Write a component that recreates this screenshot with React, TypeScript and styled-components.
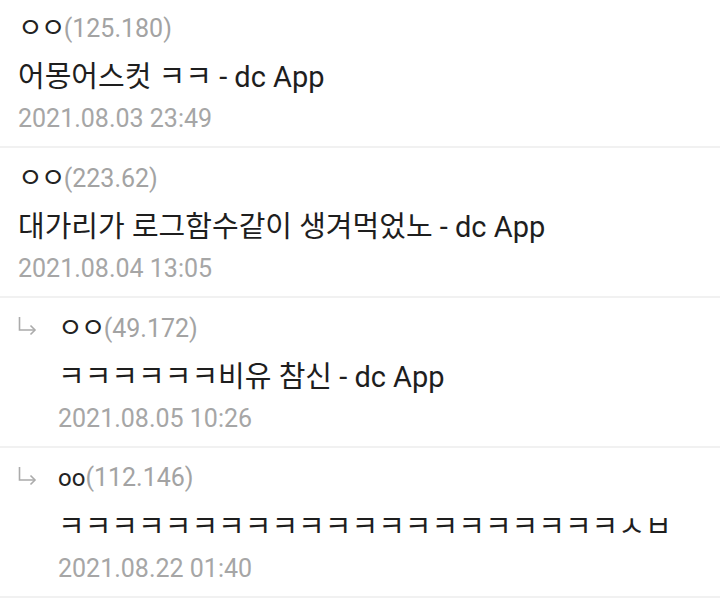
import React from 'react';
import styled, { createGlobalStyle } from 'styled-components';

const GlobalStyle = createGlobalStyle`
  html, body {
    margin: 0;
    padding: 0;
    background: #fff;
  }
  body {
    font-family: Roboto, "Noto Sans CJK KR", sans-serif;
    -webkit-font-smoothing: antialiased;
  }
`;

interface IComment {
  nick: string;
  ip: string;
  text: string;
  date: string;
  reply?: boolean;
}

const comments: IComment[] = [
  { nick: 'ㅇㅇ', ip: '(125.180)', text: '어몽어스컷 ㅋㅋ - dc App', date: '2021.08.03 23:49' },
  { nick: 'ㅇㅇ', ip: '(223.62)', text: '대가리가 로그함수같이 생겨먹었노 - dc App', date: '2021.08.04 13:05' },
  { nick: 'ㅇㅇ', ip: '(49.172)', text: 'ㅋㅋㅋㅋㅋㅋ비유 참신 - dc App', date: '2021.08.05 10:26', reply: true },
  {
    nick: 'oo',
    ip: '(112.146)',
    text: 'ㅋㅋㅋㅋㅋㅋㅋㅋㅋㅋㅋㅋㅋㅋㅋㅋㅋㅋㅋㅋㅋㅅㅂ',
    date: '2021.08.22 01:40',
    reply: true
  }
];

const List = styled.ul`
  list-style: none;
  margin: 0;
  padding: 0;
  width: 720px;
`;

const Row = styled.li<{ $reply?: boolean }>`
  display: grid;
  grid-template-columns: ${(p) => (p.$reply ? '40px 1fr' : '0 1fr')};
  padding: 12px 18px 9px;
  border-bottom: 2px solid #f1f1f1;

  &:first-child {
    padding-top: 10px;
  }
`;

const ReplyMark = styled.div`
  padding-top: 5px;
  color: #ababab;
`;

const Body = styled.div`
  display: flex;
  flex-direction: column;
  min-width: 0;
`;

const Writer = styled.div`
  height: 36px;
  line-height: 36px;
  font-size: 24px;
  color: #222;
  white-space: nowrap;
`;

// the jamo nick "ㅇㅇ" is set a little larger, with its glyphs pulled together
const Nick = styled.span<{ $jamo?: boolean }>`
  font-size: ${(p) => (p.$jamo ? '27px' : '24px')};
  letter-spacing: ${(p) => (p.$jamo ? '-2px' : '0')};
`;

const Ip = styled.span`
  color: #a3a3a3;
  font-size: 25px;
`;

const Text = styled.div`
  margin-top: 11px;
  height: 40px;
  line-height: 40px;
  font-size: 29px;
  color: #1e1e1e;
  white-space: nowrap;
`;

const Date = styled.div`
  margin-top: 4px;
  height: 36px;
  line-height: 36px;
  font-size: 25px;
  color: #a6a6a6;
  white-space: nowrap;
`;

const ArrowIcon = () => (
  <svg width="20" height="22" viewBox="0 0 20 22" fill="none" stroke="currentColor" strokeWidth="1.6">
    <path d="M1.5 2 V15 H16.5" />
    <path d="M12.5 10.5 L17 15 L12.5 19.5" />
  </svg>
);

const App = () => (
  <>
    <GlobalStyle />
    <List>
      {comments.map((c, i) => (
        <Row key={i} $reply={c.reply}>
          <ReplyMark>{c.reply && <ArrowIcon />}</ReplyMark>
          <Body>
            <Writer>
              <Nick $jamo={c.nick !== 'oo'}>{c.nick}</Nick>
              <Ip>{c.ip}</Ip>
            </Writer>
            <Text>{c.text}</Text>
            <Date>{c.date}</Date>
          </Body>
        </Row>
      ))}
    </List>
  </>
);

export default App;
